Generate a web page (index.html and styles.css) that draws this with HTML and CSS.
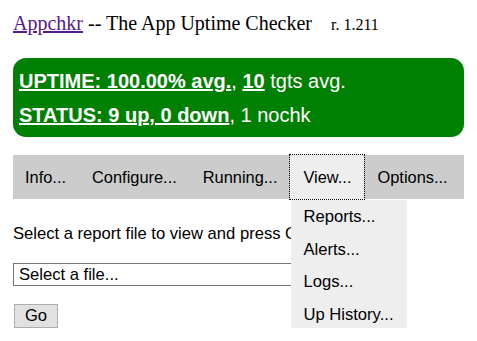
FILE: index.html
```html
<!DOCTYPE html>
<html lang="en">
<head>
  <meta charset="UTF-8">
  <title>Appchkr</title>
  <link rel="stylesheet" href="styles.css">
</head>
<body>
  <div class="header">
    <a href="#" class="app-link">Appchkr</a> -- The App Uptime Checker
    <span class="rev">r. 1.211</span>
  </div>

  <div class="summary">
    <div class="summary-line">
      <a href="#">UPTIME: 100.00% avg.</a>, <a href="#">10</a> tgts avg.
    </div>
    <div class="summary-line">
      <a href="#">STATUS: 9 up, 0 down</a>, 1 nochk
    </div>
  </div>

  <ul class="menu">
    <li>Info...</li>
    <li>Configure...</li>
    <li>Running...</li>
    <li class="open">View...
      <ul class="dropdown">
        <li>Reports...</li>
        <li>Alerts...</li>
        <li>Logs...</li>
        <li>Up History...</li>
      </ul>
    </li>
    <li>Options...</li>
  </ul>

  <p class="prompt">Select a report file to view and press Go.</p>
  <div class="file-row">
    <select class="file-select">
      <option>Select a file...</option>
    </select>
  </div>
  <button class="go-btn">Go</button>
</body>
</html>
```

FILE: styles.css
```css
body {
  margin: 0;
  padding: 0 13px;
  font-family: "Liberation Sans", Arial, sans-serif;
  font-size: 16.6px;
  color: #000;
}

.header {
  font-family: "Liberation Serif", "Times New Roman", serif;
  font-size: 20px;
  padding-top: 12px;
  height: 58px;
  box-sizing: border-box;
}

.app-link {
  color: #551a8b;
}

.rev {
  font-size: 16px;
  margin-left: 14px;
}

.summary {
  background-color: #008000;
  border-radius: 13px;
  color: white;
  padding: 6px 6px 8px;
  height: 79px;
  box-sizing: border-box;
  font-size: 20px;
}

.summary-line {
  line-height: 34px;
}

.summary a {
  color: white;
  font-weight: bold;
}

.menu {
  list-style: none;
  margin: 18px 0 0;
  padding: 0;
  display: flex;
  background-color: #ccc;
  height: 44px;
  line-height: 45px;
  font-size: 16.4px;
}

.menu > li {
  padding: 0 13px;
  position: relative;
}

.menu > li:first-child {
  padding-left: 12px;
}

.menu > li.open {
  background-color: #eee;
  outline: 1px dotted #000;
}

.dropdown {
  list-style: none;
  margin: 0;
  padding: 1px 0 0;
  position: absolute;
  top: 45px;
  left: 1px;
  width: 116px;
  background-color: #eee;
  line-height: 32.5px;
  height: 128px;
  box-sizing: border-box;
  font-size: 16.6px;
}

.dropdown li {
  padding: 0 12px;
  white-space: nowrap;
}

.prompt {
  margin: 25px 0 19px;
}

.file-select {
  font-family: "Liberation Sans", Arial, sans-serif;
  font-size: 16.6px;
  width: 340px;
  height: 23px;
  border: 1px solid #767676;
  background: white;
  padding: 0 5px;
  appearance: none;
}

.go-btn {
  margin: 18px 0 0 1px;
  font-family: "Liberation Sans", Arial, sans-serif;
  font-size: 16.6px;
  width: 44px;
  height: 24px;
  padding: 0;
  background-color: #e1e1e1;
  border: 1px solid #adadad;
}
```
